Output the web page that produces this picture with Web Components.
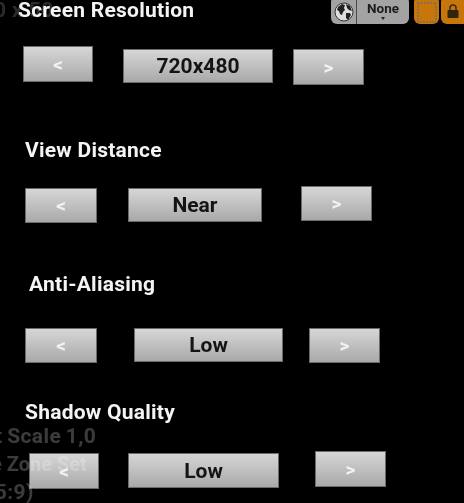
<!DOCTYPE html>
<html>
<head>
<meta charset="utf-8">
<style>
  html, body { margin: 0; background: #000; }
  body { width: 464px; height: 503px; overflow: hidden; position: relative; font-family: Roboto, "Liberation Sans", sans-serif; }
</style>
</head>
<body>
<settings-panel>
  <setting-row title="Screen Resolution" value="720x480" style="--h:135px;--tx:18px;--ty:0px;--row-top:26px;--lx:23px;--lw:70px;--lh:36px;--ly:0px;--cg:30px;--cw:150px;--ch:34px;--cy:3px;--rg:20px;--ry:3px;--rh:36px"></setting-row>
  <setting-row title="View Distance" value="Near" style="--h:134px;--tx:25px;--ty:5px;--row-top:26px;--lx:25px;--lw:72px;--lh:35px;--ly:2px;--cg:31px;--cw:134px;--ch:34px;--cy:2px;--rg:39px;--ry:0px;--rh:35px"></setting-row>
  <setting-row title="Anti-Aliasing" value="Low" style="--h:128px;--tx:29px;--ty:5px;--row-top:34px;--lx:25px;--lw:72px;--lh:35px;--ly:0px;--cg:37px;--cw:149px;--ch:34px;--cy:0px;--rg:26px;--ry:0px;--rh:35px"></setting-row>
  <setting-row title="Shadow Quality" value="Low" style="--h:106px;--tx:25px;--ty:5px;--row-top:29px;--lx:29px;--lw:70px;--lh:36px;--ly:2px;--cg:29px;--cw:151px;--ch:35px;--cy:2px;--rg:36px;--ry:0px;--rh:36px"></setting-row>
</settings-panel>
<ghost-text></ghost-text>
<top-bar></top-bar>

<script>
class GhostText extends HTMLElement {
  constructor() {
    super();
    this.attachShadow({ mode: "open" });
    this.shadowRoot.innerHTML = `
      <style>
        :host { position: absolute; inset: 0; display: block; color: rgba(255,255,255,.23); font: bold 21px Roboto, sans-serif; letter-spacing: .4px; filter: blur(.4px); pointer-events: none; }
        span { position: absolute; white-space: nowrap; line-height: 24px; }
      </style>
      <span style="left:-6px;top:-2px;color:rgba(255,255,255,.17)">0 x 50</span>
      <span style="left:-5px;top:424px;word-spacing:-1px">t Scale 1,0</span>
      <span style="left:-9px;top:452px;font-size:20px;letter-spacing:0">e Zone Set</span>
      <span style="left:-13px;top:480px">(5:9)</span>
    `;
  }
}
customElements.define("ghost-text", GhostText);

class TopBar extends HTMLElement {
  constructor() {
    super();
    this.attachShadow({ mode: "open" });
    this.shadowRoot.innerHTML = `
      <style>
        :host { position: absolute; top: -4px; left: 331px; display: flex; gap: 5px; z-index: 3; filter: blur(.4px); }
        .grey { display: flex; width: 78px; height: 28px; border-radius: 6px; background: #a3a3a3; overflow: hidden; }
        .globe { width: 26px; display: flex; align-items: center; justify-content: center; padding-top: 4px; box-sizing: border-box; border-right: 1px solid #4a4a4a; }
        .none { flex: 1; text-align: center; font: bold 13.5px/13px Roboto, sans-serif; color: #1c1c1c; padding-top: 6px; position: relative; }
        .none::after { content: ""; position: absolute; left: 24px; top: 21px; border: 2px solid transparent; border-top: 3px solid #222; border-bottom: 0; }
        .orange { width: 25px; height: 28px; border-radius: 6px; background: #c8750a; display: flex; align-items: center; justify-content: center; padding-top: 4px; box-sizing: border-box; }
        .lock { width: 28px; margin-left: -3px; justify-content: flex-start; padding: 1px 0 0 6px; }
      </style>
      <div class="grey">
        <div class="globe">
          <svg width="20" height="20" viewBox="0 0 20 20">
            <circle cx="10" cy="10" r="9" fill="#dedede" stroke="#333" stroke-width="1"/>
            <path d="M4 5l4-3 3 1-1 3 1 2-2 2-1 3-2-1-1-3-2-1zM12 2l4 2 2 5-3-1-2-2zM12 11l4 0 1 2-3 5-2-2z" fill="#222"/>
          </svg>
        </div>
        <div class="none">None</div>
      </div>
      <div class="orange">
        <svg width="20" height="21" viewBox="0 0 20 21">
          <rect x="1" y="1" width="18" height="19" fill="none" stroke="#75705e" stroke-width="1.4" stroke-dasharray="2 1"/>
        </svg>
      </div>
      <div class="orange lock">
        <svg width="12" height="14" viewBox="0 0 12 14">
          <path d="M3 6V4a3 3 0 0 1 6 0v2" fill="none" stroke="#3a2a10" stroke-width="1.5"/>
          <rect x="0.5" y="6" width="11" height="8" rx="1" fill="#33240e"/>
        </svg>
      </div>
    `;
  }
}
customElements.define("top-bar", TopBar);

class SettingsPanel extends HTMLElement {
  constructor() {
    super();
    this.attachShadow({ mode: "open" });
    this.shadowRoot.innerHTML = `
      <style>
        :host { display: flex; flex-direction: column; filter: blur(.4px); }
      </style>
      <slot></slot>
    `;
  }
}
customElements.define("settings-panel", SettingsPanel);

class SettingRow extends HTMLElement {
  constructor() {
    super();
    this.attachShadow({ mode: "open" });
    const title = this.getAttribute("title");
    const value = this.getAttribute("value");
    this.shadowRoot.innerHTML = `
      <style>
        :host { display: block; height: var(--h); box-sizing: border-box; }
        h2 { margin: var(--ty) 0 0 var(--tx); font: bold 21px/20px Roboto, sans-serif; letter-spacing: .25px; color: #f4f4f4; height: 20px; }
        .row { display: flex; align-items: flex-start; margin-top: var(--row-top); }
        .btn { box-sizing: border-box; display: flex; align-items: center; justify-content: center; border: 1px solid #6b6b6b; background: linear-gradient(#d6d6d6, #a9a9a9); }
        .arrow { color: #f2f2f2; font: bold 19px Roboto, sans-serif; }
        .l { margin: var(--ly) 0 0 var(--lx); width: var(--lw); height: var(--lh); }
        .c { margin: var(--cy) 0 0 var(--cg); width: var(--cw); height: var(--ch); color: #141414; font: bold 21px Roboto, sans-serif; }
        .r { margin: var(--ry) 0 0 var(--rg); width: 71px; height: var(--rh); }
      </style>
      <h2>${title}</h2>
      <div class="row">
        <div class="btn l arrow">&lt;</div>
        <div class="btn c">${value}</div>
        <div class="btn r arrow">&gt;</div>
      </div>
    `;
  }
}
customElements.define("setting-row", SettingRow);
</script>
</body>
</html>
